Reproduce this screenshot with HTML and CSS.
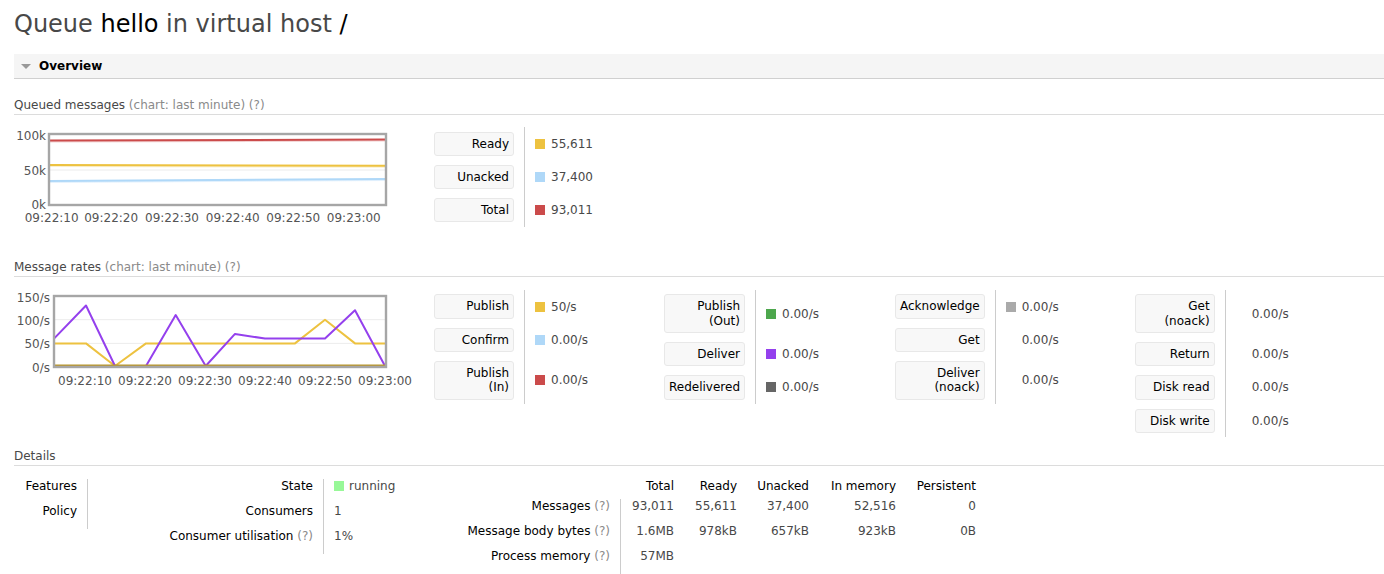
FILE: index.html
```html
<!DOCTYPE html>
<html>
<head>
<meta charset="utf-8">
<title>Queue hello</title>
<link rel="stylesheet" href="styles.css">
</head>
<body>
<div class="page">
  <h1 class="title">Queue <span class="em">hello</span> in virtual host <span class="em">/</span></h1>

  <div class="bar">
    <svg class="tri" width="10" height="5" viewBox="0 0 10 5"><polygon points="0,0 10,0 5,5" fill="#999"/></svg>
    <span>Overview</span>
  </div>

  <h3 class="sub">Queued messages <span class="hint">(chart: last minute) (?)</span></h3>
  <div class="row q">
    <div class="chart">
      <svg width="410" height="100" viewBox="0 0 410 100">
        <line x1="35" y1="45" x2="372" y2="45" stroke="#ececec" stroke-width="1"/>
        <line x1="36" y1="16.5" x2="371" y2="15.5" stroke="#cb4b4b" stroke-opacity="0.25" stroke-width="2"/>
        <line x1="36" y1="15.5" x2="371" y2="14.5" stroke="#cb4b4b" stroke-width="2"/>
        <line x1="36" y1="41" x2="371" y2="41.7" stroke="#edc240" stroke-opacity="0.25" stroke-width="2"/>
        <line x1="36" y1="40" x2="371" y2="40.7" stroke="#edc240" stroke-width="2"/>
        <line x1="36" y1="57" x2="371" y2="55" stroke="#afd8f8" stroke-opacity="0.35" stroke-width="2"/>
        <line x1="36" y1="56" x2="371" y2="54" stroke="#afd8f8" stroke-width="2"/>
        <rect x="35" y="9" width="337" height="71" fill="none" stroke="#a6a6a6" stroke-width="2.4"/>
        <g class="axis">
          <text x="32" y="15" text-anchor="end">100k</text>
          <text x="32" y="50" text-anchor="end">50k</text>
          <text x="32" y="84" text-anchor="end">0k</text>
          <text x="37.7" y="97" text-anchor="middle">09:22:10</text>
          <text x="97.2" y="97" text-anchor="middle">09:22:20</text>
          <text x="158" y="97" text-anchor="middle">09:22:30</text>
          <text x="218.8" y="97" text-anchor="middle">09:22:40</text>
          <text x="279.3" y="97" text-anchor="middle">09:22:50</text>
          <text x="339.8" y="97" text-anchor="middle">09:23:00</text>
        </g>
      </svg>
    </div>
    <div class="legend">
      <div class="lbl"><span class="box">Ready</span></div>
      <div class="val"><i class="sw yellow"></i>55,611</div>
      <div class="lbl"><span class="box">Unacked</span></div>
      <div class="val"><i class="sw blue"></i>37,400</div>
      <div class="lbl"><span class="box">Total</span></div>
      <div class="val"><i class="sw red"></i>93,011</div>
    </div>
  </div>

  <h3 class="sub rates-h">Message rates <span class="hint">(chart: last minute) (?)</span></h3>
  <div class="row rates">
    <div class="chart">
      <svg width="410" height="106" viewBox="0 0 410 106">
        <line x1="40" y1="34.7" x2="372" y2="34.7" stroke="#ececec" stroke-width="1"/>
        <line x1="40" y1="58.4" x2="372" y2="58.4" stroke="#ececec" stroke-width="1"/>
        <polyline fill="none" stroke="#edc240" stroke-width="2" stroke-linejoin="round"
          points="40,58.4 72,58.4 101,81 132,58.4 161.7,58.4 191.7,58.4 221,58.4 251,58.4 281,58.4 311,34.7 341,58.4 371,58.4"/>
        <polyline fill="none" stroke="#9440ed" stroke-width="2" stroke-linejoin="round"
          points="40,53.6 72,20.5 101,81 132,81 161.7,30 191.7,81 221,48.9 251,53.6 281,53.6 311,53.6 341,25.2 371,81"/>
        <line x1="41" y1="80.6" x2="371" y2="80.6" stroke="#b8952c" stroke-width="2.4"/>
        <rect x="40" y="11" width="332" height="71" fill="none" stroke="#a6a6a6" stroke-width="2.4"/>
        <g class="axis">
          <text x="36" y="17" text-anchor="end">150/s</text>
          <text x="36" y="39.5" text-anchor="end">100/s</text>
          <text x="36" y="63" text-anchor="end">50/s</text>
          <text x="36" y="86.5" text-anchor="end">0/s</text>
          <text x="71" y="100" text-anchor="middle">09:22:10</text>
          <text x="131" y="100" text-anchor="middle">09:22:20</text>
          <text x="191" y="100" text-anchor="middle">09:22:30</text>
          <text x="251" y="100" text-anchor="middle">09:22:40</text>
          <text x="311" y="100" text-anchor="middle">09:22:50</text>
          <text x="371" y="100" text-anchor="middle">09:23:00</text>
        </g>
      </svg>
    </div>
    <div class="legend">
      <div class="lbl"><span class="box">Publish</span></div>
      <div class="val"><i class="sw yellow"></i>50/s</div>
      <div class="lbl"><span class="box">Confirm</span></div>
      <div class="val"><i class="sw blue"></i>0.00/s</div>
      <div class="lbl"><span class="box">Publish<br>(In)</span></div>
      <div class="val"><i class="sw red"></i>0.00/s</div>
    </div>
    <div class="legend">
      <div class="lbl"><span class="box">Publish<br>(Out)</span></div>
      <div class="val"><i class="sw green"></i>0.00/s</div>
      <div class="lbl"><span class="box">Deliver</span></div>
      <div class="val"><i class="sw purple"></i>0.00/s</div>
      <div class="lbl"><span class="box">Redelivered</span></div>
      <div class="val"><i class="sw dgray"></i>0.00/s</div>
    </div>
    <div class="legend">
      <div class="lbl"><span class="box">Acknowledge</span></div>
      <div class="val"><i class="sw lgray"></i>0.00/s</div>
      <div class="lbl"><span class="box">Get</span></div>
      <div class="val"><i class="sw none"></i>0.00/s</div>
      <div class="lbl"><span class="box">Deliver<br>(noack)</span></div>
      <div class="val"><i class="sw none"></i>0.00/s</div>
    </div>
    <div class="legend">
      <div class="lbl"><span class="box">Get<br>(noack)</span></div>
      <div class="val"><i class="sw none"></i>0.00/s</div>
      <div class="lbl"><span class="box">Return</span></div>
      <div class="val"><i class="sw none"></i>0.00/s</div>
      <div class="lbl"><span class="box">Disk read</span></div>
      <div class="val"><i class="sw none"></i>0.00/s</div>
      <div class="lbl"><span class="box">Disk write</span></div>
      <div class="val"><i class="sw none"></i>0.00/s</div>
    </div>
  </div>

  <h3 class="sub details-h">Details</h3>
  <div class="details">
    <div class="facts a">
      <div class="th">Features</div><div class="td"></div>
      <div class="th">Policy</div><div class="td"></div>
    </div>
    <div class="facts b">
      <div class="th">State</div><div class="td"><i class="sw run"></i>running</div>
      <div class="th">Consumers</div><div class="td">1</div>
      <div class="th">Consumer utilisation <span class="hint">(?)</span></div><div class="td">1%</div>
    </div>
    <div class="facts c">
      <div class="hd blank"></div>
      <div class="hd">Total</div>
      <div class="hd">Ready</div>
      <div class="hd">Unacked</div>
      <div class="hd">In memory</div>
      <div class="hd">Persistent</div>

      <div class="th">Messages <span class="hint">(?)</span></div>
      <div class="n first">93,011</div>
      <div class="n">55,611</div>
      <div class="n">37,400</div>
      <div class="n">52,516</div>
      <div class="n">0</div>

      <div class="th">Message body bytes <span class="hint">(?)</span></div>
      <div class="n first">1.6MB</div>
      <div class="n">978kB</div>
      <div class="n">657kB</div>
      <div class="n">923kB</div>
      <div class="n">0B</div>

      <div class="th">Process memory <span class="hint">(?)</span></div>
      <div class="n first">57MB</div>
      <div class="n"></div>
      <div class="n"></div>
      <div class="n"></div>
      <div class="n"></div>
    </div>
  </div>
</div>
</body>
</html>
```

FILE: styles.css
```css
* { box-sizing: border-box; }
html, body { margin: 0; padding: 0; background: #fff; }
body {
  font-family: "DejaVu Sans", Verdana, sans-serif;
  font-size: 12px;
  color: #484848;
}
.page { padding-left: 14px; }

.title {
  margin: 0;
  padding-top: 10px;
  font-size: 24px;
  line-height: 28px;
  font-weight: normal;
  color: #484848;
}
.title .em { color: #000; }

.bar {
  margin-top: 16px;
  height: 25px;
  background: #f5f5f5;
  border-bottom: 1px solid #d0d0d0;
  display: flex;
  align-items: center;
  padding-left: 7px;
}
.bar .tri { display: block; margin-right: 8px; }
.bar span { font-weight: bold; color: #000; }

.sub {
  margin: 18px 0 0;
  font-size: 12px;
  font-weight: normal;
  line-height: 16px;
  padding-bottom: 1px;
  border-bottom: 1px solid #dcdcdc;
  color: #484848;
}
.sub.rates-h { margin-top: 32px; }
.sub.details-h { margin-top: 11px; }
.hint { color: #8a8a8a; }

.row { display: flex; align-items: flex-start; }
.row.q { margin-top: 10px; }
.row.rates { margin-top: 8px; }

.chart { width: 420px; flex: none; }
.chart svg { display: block; overflow: visible; }
.axis text {
  font-family: "DejaVu Sans", Verdana, sans-serif;
  font-size: 12px;
  fill: #545454;
}

.legend {
  display: grid;
  grid-template-columns: auto 140px;
  margin-top: 2px;
  flex: none;
}
.rates .legend { margin-top: 5px; }
.lbl { padding: 4.5px 10px 4.5px 0; }
.box {
  display: block;
  min-width: 80px;
  text-align: right;
  padding: 4px 4px;
  line-height: 14.3px;
  border: 1px solid #e8e8e8;
  border-radius: 3px;
  background: #f8f8f8;
  color: #000;
}
.val {
  border-left: 1px solid #ccc;
  padding-left: 10px;
  display: flex;
  align-items: center;
}
.sw {
  display: inline-block;
  width: 10px;
  height: 10px;
  margin-right: 6px;
  flex: none;
}
.sw.yellow { background: #edc240; }
.sw.blue { background: #afd8f8; }
.sw.red { background: #cb4b4b; }
.sw.green { background: #4da74d; }
.sw.purple { background: #9440ed; }
.sw.dgray { background: #666; }
.sw.lgray { background: #aaa; }
.sw.none { background: transparent; }
.sw.run { background: #98f898; margin-right: 5px; vertical-align: -1px; }

.details { display: flex; align-items: flex-start; margin-top: 13px; }
.facts { display: grid; flex: none; align-content: start; }
.facts.a { grid-template-columns: 73px 60px; }
.facts.b { grid-template-columns: 176px 127px; }
.facts.c { grid-template-columns: 170px 54px 63px 72px 87px 80px; }
.facts > div { line-height: 15px; padding-bottom: 10px; white-space: nowrap; }
.facts .th { text-align: right; padding-right: 10px; color: #000; }
.facts .td {
  border-left: 1px solid #ccc;
  padding-left: 10px;
}
.facts > .hd { padding-bottom: 5px; text-align: right; color: #000; }
.facts .n { text-align: right; }
.facts .n.first { border-left: 1px solid #ccc; }
```
